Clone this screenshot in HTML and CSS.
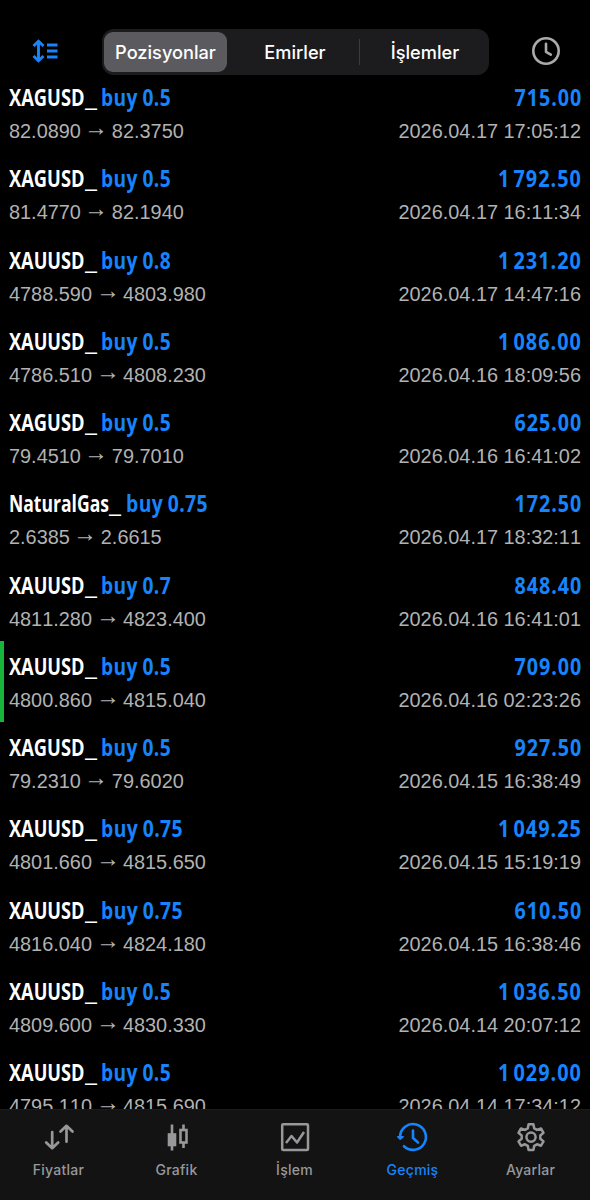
FILE: index.html
```
<!DOCTYPE html>
<html lang="tr">
<head>
<meta charset="utf-8">
<title>Geçmiş</title>
<link rel="stylesheet" href="styles.css">
</head>
<body>
<div class="app">
  <header class="header">
    <svg class="sort-icon" viewBox="0 0 28 24" fill="none" stroke="#1784fb" stroke-width="2.9">
      <path d="M7.500 2.500v19M2.500 7l5-4.800 5 4.800M2.500 17l5 4.800 5-4.800"/>
      <path d="M16 6h10.500M16 12h10.500M16 18h10.500"/>
    </svg>
    <nav class="segments">
      <span class="segment segment-active">Pozisyonlar</span>
      <span class="segment">Emirler</span>
      <span class="segment segment-divided">İşlemler</span>
    </nav>
    <svg class="clock-icon" viewBox="0 0 30 30" fill="none" stroke="#aaaaac" stroke-width="2.6">
      <circle cx="15" cy="15" r="12.7"/>
      <path d="M15 7.800v8l4.800 2.800" stroke-linecap="round" stroke-linejoin="round"/>
    </svg>
  </header>
  <main class="list" id="list"></main>
  <footer class="tabs">
    <div class="tab">
      <svg class="tab-icon" viewBox="0 0 32 32" fill="none" stroke="currentColor" stroke-width="2.700" stroke-linecap="round" stroke-linejoin="round">
        <path d="M9.200 11v16M3.200 21.500l6 5.700 6-5.700M23.500 20.700V5M17.500 10.500l6-5.700 6 5.700"/>
      </svg>
      <span>Fiyatlar</span>
    </div>
    <div class="tab">
      <svg class="tab-icon" viewBox="0 0 32 32" fill="none" stroke="currentColor" stroke-width="2.6">
        <path d="M11 3.500v26M22.500 3.500v5M22.500 22v5"/>
        <rect x="8" y="13.500" width="6" height="10.500" fill="currentColor"/>
        <rect x="19.500" y="9" width="6" height="12.500"/>
      </svg>
      <span>Grafik</span>
    </div>
    <div class="tab">
      <svg class="tab-icon" viewBox="0 0 32 32" fill="none" stroke="currentColor" stroke-width="2.500" stroke-linejoin="round">
        <rect x="3.200" y="3.200" width="25.800" height="25.800" rx="1"/>
        <path d="M7 22l5.500-7 5.500 6.500L25 11"/>
      </svg>
      <span>İşlem</span>
    </div>
    <div class="tab tab-active">
      <svg class="tab-icon" viewBox="0 0 32 32" fill="none" stroke="currentColor" stroke-width="2.6" stroke-linecap="round" stroke-linejoin="round">
        <path d="M3.100 16A12.900 12.900 0 1 1 7 25.200"/>
        <path d="M.7 15.700h5.500l-3 2.500z" fill="currentColor" stroke-width="1.500"/>
        <path d="M16 9.500v7.500l5 4.500"/>
      </svg>
      <span>Geçmiş</span>
    </div>
    <div class="tab">
      <svg class="tab-icon" viewBox="0 0 32 32" fill="none" stroke="currentColor" stroke-width="2.500" stroke-linejoin="round">
        <path d="M13.600 3.200h4.800l.8 4.100 2.800 1.600 4-1.400 2.500 4.300-3.200 2.700v3.200l3.200 2.700-2.500 4.300-4-1.400-2.800 1.600-.8 4.100h-4.800l-.8-4.100-2.800-1.600-4 1.400-2.500-4.300 3.200-2.700v-3.200l-3.200-2.700L6 7.500l4 1.400 2.800-1.600z"/>
        <circle cx="16" cy="16.100" r="4.600"/>
      </svg>
      <span>Ayarlar</span>
    </div>
  </footer>
</div>
<script src="script.js"></script>
</body>
</html>
```
FILE: styles.css
```
* { box-sizing: border-box; }
body { margin: 0; background: #000; }
.app {
  display: flex;
  flex-direction: column;
  width: 590px;
  height: 1200px;
  overflow: hidden;
  background: #000;
  color: #fff;
}
.header {
  display: flex;
  flex: none;
  align-items: center;
  height: 72px;
  padding: 29px 29px 0 31px;
}
.sort-icon { width: 28px; height: 24px; }
.segments {
  display: grid;
  grid-template-columns: 123px 132px 1fr;
  flex: none;
  align-self: flex-start;
  width: 387px;
  height: 46px;
  margin: 0 41px 0 43px;
  padding: 3px 2px;
  border-radius: 12px;
  background: #1c1c1e;
}
.segment {
  display: flex;
  align-items: center;
  justify-content: center;
  font: 500 18.2px/1 Inter, sans-serif;
}
.segment-active { border-radius: 9px; background: #5b5b5f; }
.segment:nth-child(2) { padding-left: 4px; }
.segment-divided {
  padding-left: 4px;
  background: linear-gradient(#3b3b3e, #3b3b3e) 0 50% / 1px 26px no-repeat;
}
.clock-icon { flex: none; width: 30px; height: 30px; margin-left: 1px; }
.list { flex: 1; min-height: 0; overflow: hidden; }
.row {
  height: 81.25px;
  padding: 9px 9px 0 9px;
}
.row-marked { box-shadow: inset 4px 0 #17b53a; }
.line { display: flex; justify-content: space-between; white-space: pre; }
.title {
  height: 35px;
  font: 700 23.6px/33px "Open Sans", sans-serif;
}
.fit { display: inline-block; transform-origin: 0 50%; }
.blue { color: #1784fb; letter-spacing: 0.5px; word-spacing: -1px; }
.amount {
  margin-right: -1px;
  transform-origin: 100% 50%;
  letter-spacing: 1.2px;
  word-spacing: -3.5px;
}
.detail {
  font: 19.9px/30px "Liberation Sans", Arial, sans-serif;
  font-kerning: none;
  color: #b2b2b2;
}
.arrow { display: inline-block; transform: translateY(-4px) scale(1.2, 1.25); }
.tabs {
  display: grid;
  grid-template-columns: repeat(5, 118px);
  flex: none;
  height: 91px;
  padding-top: 11px;
  border-top: 1px solid #1c1c1c;
  background: #131313;
}
.tab {
  display: flex;
  flex-direction: column;
  align-items: center;
  gap: 7px;
  margin-left: -1px;
  color: #98989a;
  font: 500 14px/20px Inter, sans-serif;
  letter-spacing: 0.25px;
}
.tab-icon { width: 32px; height: 32px; }
.tab-active { color: #1784fb; }
```
FILE: script.js
```
const deals = [
  ["XAGUSD", "0.5", "715.00", "82.0890", "82.3750", "2026.04.17 17:05:12"],
  ["XAGUSD", "0.5", "1 792.50", "81.4770", "82.1940", "2026.04.17 16:11:34"],
  ["XAUUSD", "0.8", "1 231.20", "4788.590", "4803.980", "2026.04.17 14:47:16"],
  ["XAUUSD", "0.5", "1 086.00", "4786.510", "4808.230", "2026.04.16 18:09:56"],
  ["XAGUSD", "0.5", "625.00", "79.4510", "79.7010", "2026.04.16 16:41:02"],
  ["NaturalGas", "0.75", "172.50", "2.6385", "2.6615", "2026.04.17 18:32:11"],
  ["XAUUSD", "0.7", "848.40", "4811.280", "4823.400", "2026.04.16 16:41:01"],
  ["XAUUSD", "0.5", "709.00", "4800.860", "4815.040", "2026.04.16 02:23:26", true],
  ["XAGUSD", "0.5", "927.50", "79.2310", "79.6020", "2026.04.15 16:38:49"],
  ["XAUUSD", "0.75", "1 049.25", "4801.660", "4815.650", "2026.04.15 15:19:19"],
  ["XAUUSD", "0.75", "610.50", "4816.040", "4824.180", "2026.04.15 16:38:46"],
  ["XAUUSD", "0.5", "1 036.50", "4809.600", "4830.330", "2026.04.14 20:07:12"],
  ["XAUUSD", "0.5", "1 029.00", "4795.110", "4815.690", "2026.04.14 17:34:12"]
];

document.getElementById("list").innerHTML = deals.map(
  ([symbol, lot, profit, open, close, time, marked]) => `
  <article class="row${marked ? " row-marked" : ""}">
    <div class="line title"><span><span class="fit" data-width="${symbol[0] === "N" ? 100 : 75.5}">${symbol}</span><span class="fit" data-width="12">_</span><span class="fit blue" data-gap="4.5" data-width="${lot.length > 3 ? 82 : 70}">buy ${lot}</span></span><span class="fit blue amount" data-width="${profit.length > 6 ? 84 : 68}">${profit}</span></div>
    <div class="line detail"><span>${open} <span class="arrow">→</span> ${close}</span><span>${time}</span></div>
  </article>`
).join("");

// Condense each heading part to its column width.
document.querySelectorAll(".fit").forEach((el) => {
  const natural = el.getBoundingClientRect().width;
  const width = Number(el.dataset.width);
  el.style.transform = `scaleX(${width / natural})`;
  if (!el.classList.contains("amount")) {
    el.style.marginRight = `${width - natural}px`;
    el.style.marginLeft = `${el.dataset.gap || 0}px`;
  }
});
```
